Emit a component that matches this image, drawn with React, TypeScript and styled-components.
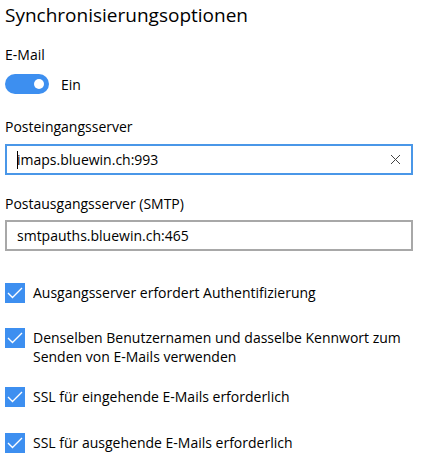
import React from "react";
import styled, { createGlobalStyle } from "styled-components";

const Global = createGlobalStyle`
  html, body { margin: 0; padding: 0; background: #ffffff; }
  body { font-family: "Open Sans", "Noto Sans", sans-serif; color: #000; }
`;

const Page = styled.div`
  width: 423px;
  height: 455px;
  overflow: hidden;
  padding: 0 10px 0 5px;
  box-sizing: border-box;
  display: flex;
  flex-direction: column;
`;

const Title = styled.h1`
  margin: 1px 0 0 0;
  font-size: 19px;
  line-height: 28px;
  font-weight: 400;
  color: #000;
`;

const Label = styled.div<{ $mt: number }>`
  margin-top: ${(p) => p.$mt}px;
  font-size: 14px;
  line-height: 20px;
  color: #000;
`;

const ToggleRow = styled.div`
  margin-top: 9px;
  height: 20px;
  display: flex;
  align-items: center;
  gap: 12px;
  font-size: 14px;
`;

const Track = styled.div`
  width: 44px;
  height: 20px;
  border-radius: 10px;
  background: #3d8ff0;
  display: flex;
  align-items: center;
  justify-content: flex-end;
  padding-right: 5px;
  box-sizing: border-box;
`;

const Knob = styled.div`
  width: 10px;
  height: 10px;
  border-radius: 50%;
  background: #fff;
`;

const Field = styled.div<{ $focused?: boolean; $mt: number }>`
  margin-top: ${(p) => p.$mt}px;
  height: 31px;
  box-sizing: border-box;
  border: 2px solid ${(p) => (p.$focused ? "#4a97e8" : "#a8a8a8")};
  display: flex;
  align-items: center;
  padding: 0 10px 0 10px;
  font-size: 14px;
  position: relative;
`;

const FieldText = styled.span`
  flex: 1;
  display: flex;
  align-items: center;
`;

const Caret = styled.span`
  display: inline-block;
  width: 1px;
  height: 18px;
  background: #000;
  margin-right: -1px;
`;

const Clear = styled.span`
  width: 12px;
  height: 12px;
  display: flex;
  align-items: center;
  justify-content: center;
`;

const CheckRow = styled.div<{ $mt: number }>`
  margin-top: ${(p) => p.$mt}px;
  display: flex;
  align-items: flex-start;
  gap: 8px;
  font-size: 14px;
  line-height: 19px;
`;

const Box = styled.div`
  flex: none;
  width: 20px;
  height: 20px;
  background: #3d8ff0;
  display: flex;
  align-items: center;
  justify-content: center;
`;

const CheckText = styled.div`
  padding-top: 0;
`;

const Check = () => (
  <Box>
    <svg width="16" height="12" viewBox="0 0 16 12">
      <path d="M1 6 L5.5 10.5 L15 1" fill="none" stroke="#fff" strokeWidth="1.4" />
    </svg>
  </Box>
);

export default function App() {
  return (
    <>
      <Global />
      <Page>
        <Title>Synchronisierungsoptionen</Title>
        <Label $mt={16}>E-Mail</Label>
        <ToggleRow>
          <Track>
            <Knob />
          </Track>
          <span>Ein</span>
        </ToggleRow>
        <Label $mt={23}>Posteingangsserver</Label>
        <Field $focused $mt={7}>
          <FieldText>
            <Caret />
            imaps.bluewin.ch:993
          </FieldText>
          <Clear>
            <svg width="11" height="11" viewBox="0 0 11 11">
              <path d="M1 1 L10 10 M10 1 L1 10" stroke="#444" strokeWidth="1" />
            </svg>
          </Clear>
        </Field>
        <Label $mt={19}>Postausgangsserver (SMTP)</Label>
        <Field $mt={6}>
          <FieldText>smtpauths.bluewin.ch:465</FieldText>
        </Field>
        <CheckRow $mt={32}>
          <Check />
          <CheckText>Ausgangsserver erfordert Authentifizierung</CheckText>
        </CheckRow>
        <CheckRow $mt={25}>
          <Check />
          <CheckText>
            Denselben Benutzernamen und dasselbe Kennwort zum Senden von E-Mails verwenden
          </CheckText>
        </CheckRow>
        <CheckRow $mt={21}>
          <Check />
          <CheckText>SSL für eingehende E-Mails erforderlich</CheckText>
        </CheckRow>
        <CheckRow $mt={26}>
          <Check />
          <CheckText>SSL für ausgehende E-Mails erforderlich</CheckText>
        </CheckRow>
      </Page>
    </>
  );
}
